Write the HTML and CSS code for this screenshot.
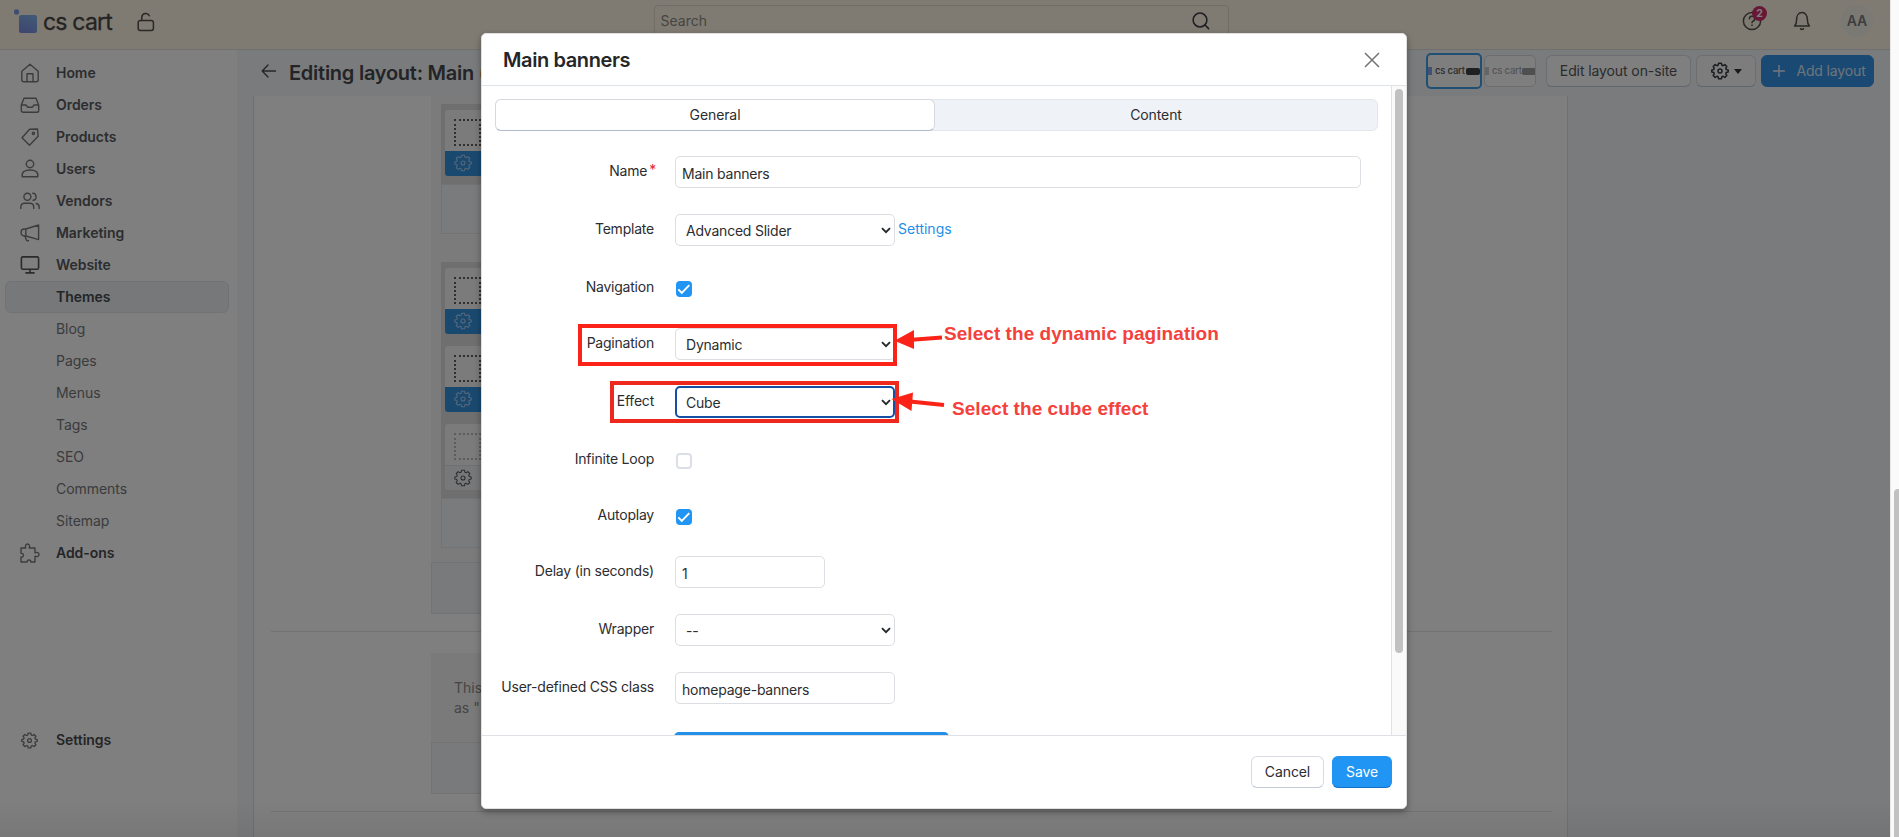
FILE: index.html
```html
<!DOCTYPE html>
<html lang="en">
<head>
<meta charset="utf-8">
<title>Editing layout: Main</title>
<link rel="stylesheet" href="styles.css">
</head>
<body>
<svg class="defs" width="0" height="0" aria-hidden="true">
  <symbol id="gear" viewBox="0 0 18 18"><path d="M7.6 1.2h2.8l.5 2 1.2.5 1.8-1.1 1.9 1.9-1.1 1.8.5 1.2 2 .5v2l-2 .5-.5 1.2 1.1 1.8-1.9 1.9-1.8-1.1-1.2.5-.5 2H7.6l-.5-2-1.2-.5-1.8 1.1-1.9-1.9 1.1-1.8-.5-1.2-2-.5V8l2-.5.5-1.2-1.1-1.8 1.900-1.900 1.800 1.100 1.200-.5z"/><circle cx="9" cy="9" r="2"/></symbol>
  <symbol id="chev" viewBox="0 0 10 7"><path d="M1 1.2l4 4 4-4"/></symbol>
</svg>
<div class="app">
  <header class="top">
    <div class="brand">
      <svg class="logo" width="24" height="25" viewBox="0 0 24 25"><defs><linearGradient id="lg" x1="0" y1="1" x2=".4" y2="0"><stop offset="0" stop-color="#7d88e0"/><stop offset="1" stop-color="#7fb0ea"/></linearGradient></defs><circle cx="2.5" cy="3" r="2.7" fill="#7c9be4"/><rect x="5" y="6" width="18" height="18" rx="2" fill="url(#lg)"/></svg>
      <span class="brand-name">cs cart</span>
      <svg class="ico dark" width="18" height="20" viewBox="0 0 18 20"><rect x="1.2" y="8.6" width="15.2" height="9.8" rx="2.2"/><path d="M4.8 8.5V5.2a4 4 0 0 1 7.6-1.5"/></svg>
    </div>
    <div class="search"><span>Search</span><svg class="ico black" width="18" height="18" viewBox="0 0 18 18"><circle cx="8" cy="8" r="6.9"/><path d="M13 13l3.6 3.6"/></svg></div>
    <div class="user">
      <span class="help"><svg class="ico dark" width="20" height="20" viewBox="0 0 20 20"><circle cx="10" cy="10" r="8.6"/><path d="M7.4 7.8a2.6 2.6 0 1 1 3.6 2.4c-.8.4-1 .8-1 1.5M10 14v.6"/></svg><b class="count">2</b></span>
      <svg class="ico dark" width="18" height="20" viewBox="0 0 18 20"><path d="M1.6 15h14.8c-1.6-1.7-2-3.2-2-6.3C14.400 4.500 12.500 1.600 9 1.600S3.600 4.500 3.600 8.700c0 3.100-.4 4.600-2 6.300zM7.600 17.700c.7.9 2.100.9 2.800 0"/></svg>
      <span class="avatar">AA</span>
    </div>
  </header>
  <div class="main">
    <nav class="side">
      <a class="item"><svg class="ico" viewBox="0 0 20 20"><path d="M1.800 8.200L10 1.300l8.200 6.900v8.600a2 2 0 0 1-2 2H3.800a2 2 0 0 1-2-2zM7 18.500v-7.700h6v7.700"/></svg>Home</a>
      <a class="item"><svg class="ico" viewBox="0 0 20 20"><path d="M1.300 10L4 3.300h12l2.700 6.700v5.500a1.800 1.800 0 0 1-1.800 1.800H3.100a1.800 1.800 0 0 1-1.800-1.800zM1.300 10H6l1.600 2.200h4.800L14 10h4.700"/></svg>Orders</a>
      <a class="item"><svg class="ico" viewBox="0 0 20 20"><path d="M9.600 2.300L17.500 2l.6 7.200-8.600 9L2 10.700z"/><circle cx="13.400" cy="6.400" r="1.100"/></svg>Products</a>
      <a class="item"><svg class="ico" viewBox="0 0 20 20"><circle cx="10" cy="5" r="3.700"/><path d="M2.300 17.800c-1-5 2.600-6.800 7.700-6.800s8.700 1.800 7.700 6.800z"/></svg>Users</a>
      <a class="item"><svg class="ico" viewBox="0 0 20 20"><circle cx="7.400" cy="5.800" r="3.500"/><path d="M.8 17.600v-1.500c0-2.500 1.600-3.900 3.900-3.900h5.100c2.300 0 3.900 1.400 3.900 3.900v1.500M12.800 2.300c4.300.2 4.300 6.800.2 7M16.200 12.500c2 .5 3 1.700 3 3.600v1.500"/></svg>Vendors</a>
      <a class="item"><svg class="ico" viewBox="0 0 20 20"><path d="M5.800 6L18.600 2v14.600L5.800 13H4.300C0 13 0 6 4.300 6zM5.800 6v7M5 13.200l1.300 3.500c.4 1.400 2 1.300 2.200.9"/></svg>Marketing</a>
      <a class="item"><svg class="ico bold" viewBox="0 0 20 20"><rect x="1.400" y="1.900" width="17.200" height="12.300" rx="1.500"/><path d="M10 14.500v3M6 17.900h8"/></svg>Website</a>
      <a class="item sub active">Themes</a>
      <a class="item sub">Blog</a>
      <a class="item sub">Pages</a>
      <a class="item sub">Menus</a>
      <a class="item sub">Tags</a>
      <a class="item sub">SEO</a>
      <a class="item sub">Comments</a>
      <a class="item sub">Sitemap</a>
      <a class="item strong"><svg class="ico" viewBox="0 0 20 20"><path d="M1 5h4.800c-1-2.200 0-4 1.700-4s2.700 1.800 1.700 4H15v4.800c2.200-1 4 0 4 1.700s-1.800 2.700-4 1.700V19h-4.200c.7-2.700-4.300-2.700-3.600 0H1v-5c3.300.8 3.300-4.300 0-3.600z"/></svg>Add-ons</a>
      <a class="item strong last"><svg class="ico small"><use href="#gear"/></svg>Settings</a>
    </nav>
    <section class="content">
      <div class="titlebar">
        <svg class="ico back" width="16" height="14" viewBox="0 0 16 14"><path d="M14.500 7H1.500M7 1L1.200 7 7 13"/></svg>
        <h1>Editing layout: Main (</h1>
        <div class="actions">
          <span class="thumb on"><i class="edge"></i><em>cs cart</em><i class="tag"></i></span>
          <span class="thumb off"><i class="edge"></i><em>cs cart</em><i class="tag"></i></span>
          <span class="btn edit">Edit layout on-site</span>
          <span class="btn tools"><svg class="ico black" width="18" height="18"><use href="#gear"/></svg><i class="caret"></i></span>
          <span class="btn add"><svg class="ico" width="12" height="12" viewBox="0 0 12 12"><path d="M6 .5v11M.5 6h11"/></svg>Add layout</span>
        </div>
      </div>
      <div class="card">
        <div class="container first">
          <div class="grid">
            <div class="blocks">
              <div class="block"><div class="pic"><i></i></div><div class="bar"><svg class="ico" width="18" height="18"><use href="#gear"/></svg></div></div>
            </div>
            <div class="foot"></div>
          </div>
          <div class="grid">
            <div class="blocks">
              <div class="block"><div class="pic"><i></i></div><div class="bar"><svg class="ico" width="18" height="18"><use href="#gear"/></svg></div></div>
              <div class="block"><div class="pic"><i></i></div><div class="bar"><svg class="ico" width="18" height="18"><use href="#gear"/></svg></div></div>
              <div class="block disabled"><div class="pic"><i></i></div><div class="bar"><svg class="ico" width="18" height="18"><use href="#gear"/></svg></div></div>
            </div>
            <div class="foot"></div>
          </div>
        </div>
        <div class="cfoot"></div>
        <hr>
        <div class="container note"><p>This<br>as "</p></div>
        <div class="cfoot"></div>
        <hr class="second">
      </div>
    </section>
  </div>
  <div class="overlay"></div>
  <div class="modal">
    <div class="mhead"><h2>Main banners</h2><svg class="ico close" width="16" height="16" viewBox="0 0 16 16"><path d="M1 1l14 14M15 1L1 15"/></svg></div>
    <div class="mbody">
      <div class="form">
        <div class="tabs"><span class="tab on">General</span><span class="tab">Content</span></div>
        <div class="row"><label>Name<sup>*</sup></label><span class="field wide">Main banners</span></div>
        <div class="row"><label>Template</label><span class="field sel">Advanced Slider<svg><use href="#chev"/></svg></span><a class="link">Settings</a></div>
        <div class="row chk"><label>Navigation</label><span class="box on"><svg viewBox="0 0 16 16"><path d="M2.300 8.300l3.500 3.600 7.500-7.700"/></svg></span></div>
        <div class="row"><label>Pagination</label><span class="field sel">Dynamic<svg><use href="#chev"/></svg></span></div>
        <div class="row"><label>Effect</label><span class="field sel focus">Cube<svg><use href="#chev"/></svg></span></div>
        <div class="row chk"><label>Infinite Loop</label><span class="box"></span></div>
        <div class="row chk"><label>Autoplay</label><span class="box on"><svg viewBox="0 0 16 16"><path d="M2.300 8.300l3.500 3.600 7.500-7.700"/></svg></span></div>
        <div class="row"><label>Delay (in seconds)</label><span class="field short">1</span></div>
        <div class="row"><label>Wrapper</label><span class="field sel">--<svg><use href="#chev"/></svg></span></div>
        <div class="row"><label>User-defined CSS class</label><span class="field mid">homepage-banners</span></div>
        <div class="more"></div>
      </div>
      <div class="mtrack"><div class="mthumb"></div></div>
    </div>
    <div class="mfoot"><span class="btn cancel">Cancel</span><span class="btn save">Save</span></div>
  </div>
  <div class="mark mark-a"></div>
  <div class="mark mark-b"></div>
  <svg class="arrows" width="60" height="100" viewBox="0 0 60 100"><path d="M4.500 20.700L24 10v19z"/><path d="M22 19.700L52 17.600" /><path d="M1.500 79L23 72.500l-1.500 18.500z"/><path d="M20 81.500L54 85"/></svg>
  <div class="callout callout-a">Select the dynamic pagination</div>
  <div class="callout callout-b">Select the cube effect</div>
</div>
<div class="pagebar"><div class="pagethumb"></div></div>
</body>
</html>
```
FILE: styles.css
```css
* { box-sizing: border-box; }
body { margin: 0; width: 1899px; height: 837px; overflow: hidden; display: flex; font: 14px/20px Inter, sans-serif; color: #2c2d30; background: #fff; }
h1, h2, p { margin: 0; }
.defs { position: absolute; }
.app { position: relative; width: 1890px; height: 837px; overflow: hidden; display: flex; flex-direction: column; }
.ico { fill: none; stroke: #76797d; stroke-width: 1.4; stroke-linecap: round; stroke-linejoin: round; flex: none; }
.ico.dark { stroke: #56524b; stroke-width: 1.5; }
.ico.black { stroke: #3a3b3e; stroke-width: 1.5; }

/* top bar */
.top { height: 50px; flex: none; display: flex; justify-content: space-between; background: #fef6e6; border-bottom: 1px solid #dedfe0; padding: 0 17px 0 14px; }
.brand { display: flex; align-items: flex-start; width: 640px; padding-top: 9px; }
.brand-name { font-size: 23px; letter-spacing: -.8px; line-height: 26px; margin-left: 5px; width: 94px; color: #4a4946; -webkit-text-stroke: .3px #4a4946; }
.brand .dark { margin-top: 3px; }
.search { width: 575px; height: 34px; margin: 5px 1px 0 -1px; border: 1px solid #e2dccf; border-radius: 4px; display: flex; justify-content: space-between; align-items: center; padding: 0 18px 2px 6px; color: #8e8a83; }
.user { width: 643px; display: flex; justify-content: flex-end; align-items: center; padding-bottom: 7px; }
.help { position: relative; height: 20px; margin-right: 31px; }
.count { position: absolute; left: 10px; top: -5px; width: 15px; height: 15px; border-radius: 8px; background: #d02f69; color: #fff; font-size: 10.500px; line-height: 15px; text-align: center; }
.avatar { width: 32px; height: 32px; margin-left: 30px; border-radius: 50%; background: #f6f2e8; color: #7b7c7e; font-weight: 600; line-height: 32px; text-align: center; }

/* sidebar */
.main { flex: 1; display: flex; min-height: 0; }
.side { width: 237px; background: #fff; padding: 7px 8px 0 5px; display: flex; flex-direction: column; }
.item { height: 32px; flex: none; display: flex; align-items: center; padding-left: 15px; font-weight: 600; color: #595b5e; border: 1px solid transparent; letter-spacing: -.05px; }
.item .ico { width: 20px; height: 20px; margin-right: 16px; margin-left: -1px; }
.item .ico.small { width: 17px; height: 17px; margin: 0 18px 0 0; }
.item .ico.bold { stroke: #55575a; stroke-width: 1.600; }
.item.sub { padding-left: 50px; font-weight: 400; color: #75777a; }
.item.sub.active { background: #edf1f5; border-color: #e1e5ea; border-radius: 6px; font-weight: 600; color: #47494d; }
.item.strong { color: #4a4c4f; }
.item.last { margin-top: 155px; }

/* page */
.content { flex: 1; background: #f4f6fa; padding-left: 16px; }
.titlebar { height: 46px; display: flex; align-items: flex-start; padding: 0 16px 0 8px; }
.back { stroke: #4b4d50; margin-top: 14px; }
h1 { font-size: 20px; line-height: 26px; font-weight: 600; margin: 10px 0 0 12px; color: #47494c; letter-spacing: -.25px; }
.actions { margin-left: auto; display: flex; align-items: center; padding-top: 3px; }
.thumb { width: 52px; height: 32px; border: 1px solid #d5d8db; border-radius: 5px; display: flex; align-items: center; overflow: hidden; margin-right: 10px; background: #fdfdfd; }
.thumb em { font: 500 9.500px/12px Inter, sans-serif; width: 33px; margin-left: 3px; color: #55565a; letter-spacing: -.2px; white-space: nowrap; }
.edge { width: 4px; height: 8px; background: #81a3e6; flex: none; }
.tag { width: 14px; height: 7px; background: #3f4042; border-radius: 2px; flex: none; }
.thumb.on { width: 56px; height: 36px; border: 2px solid #409fe9; margin-right: 2px; }
.thumb.off > * { opacity: .5; }
.thumb.off .edge { background: #999; }
.btn { height: 32px; border: 1px solid #d8dce2; border-bottom-color: #c3cad8; border-radius: 6px; display: flex; align-items: center; justify-content: center; background: #fff; }
.edit { width: 145px; margin-right: 5px; color: #55575a; letter-spacing: -.1px; }
.tools { width: 60px; margin-right: 5px; gap: 5px; background: #fafbfd; }
.caret { border: 4px solid transparent; border-top: 5px solid #333; border-bottom: 0; }
.add { width: 113px; gap: 11px; padding-left: 4px; letter-spacing: -.15px; background: #3594e6; border-color: #3594e6; color: #d9e8f6; }
.add .ico { stroke: #e5eff8; }

.card { width: 1315px; height: 745px; background: #fff; border: solid #dce1e7; border-width: 0 1px; padding-left: 17px; overflow: hidden; }
.container { margin-left: 160px; width: 960px; background: #f7f7f7; padding: 8px 10px 0; }
.container.first { height: 466px; }
.grid { width: 460px; margin-bottom: 28px; }
.blocks { background: #dedede; padding: 6px 4px 8px; display: flex; flex-direction: column; gap: 12px; }
.foot, .cfoot { background: #f5f7f9; border: 1px solid #e3e6e9; height: 50px; }
.block { border-radius: 3px; overflow: hidden; height: 66px; }
.pic { height: 41px; background: #f7f7f7; padding: 9px; }
.pic i { display: block; width: 27px; height: 27px; border: 2px dotted #606163; }
.bar { height: 25px; background: #3592e0; padding: 3px 9px; }
.bar .ico { stroke: #a9cef0; stroke-width: 1.100; }
.disabled .pic i { opacity: .4; }
.disabled .bar { background: #eef0f3; border-top: 1px solid #dde0e3; }
.disabled .ico { stroke: #5c5e61; }
.cfoot { margin-left: 160px; width: 960px; height: 52px; background: #f3f5f8; }
hr { border: 0; border-top: 1px solid #e4e4e4; margin: 17px 0 21px; width: 1281px; }
.note { height: 89px; background: #f4f4f4; padding: 25px 12px 0 23px; color: #8c8c8c; }
.overlay { position: absolute; inset: 0; background: linear-gradient(transparent 800px, rgba(0,0,0,.06)), rgba(0,0,0,.5); }

/* dialog */
.modal { position: absolute; left: 481px; top: 33px; width: 926px; height: 776px; background: #fff; border-radius: 5px; border: 1px solid #e0e0e0; display: flex; flex-direction: column; box-shadow: 0 3px 7px rgba(0,0,0,.35); }
.mhead { height: 52px; border-bottom: 1px solid #dde3e6; display: flex; justify-content: space-between; padding: 13px 26px 0 21px; }
h2 { font-size: 20px; line-height: 26px; font-weight: 600; color: #252628; letter-spacing: -.4px; }
.close { stroke: #737475; stroke-width: 1.500; margin-top: 5px; stroke-linecap: butt; }
.mbody { height: 650px; border-bottom: 1px solid #dde1e5; display: flex; overflow: hidden; }
.form { width: 909px; padding: 13px 13px 0; letter-spacing: -.22px; }
.tabs { height: 32px; display: flex; background: #eff3f8; border: 1px solid #e2e7ec; border-radius: 6px; margin-bottom: 25px; line-height: 30px; letter-spacing: -.1px; }
.tab { flex: 1; text-align: center; }
.tab.on { flex: 0 0 440px; background: #fff; border: 1px solid #d5d9dd; border-bottom-color: #aeb9cb; border-radius: 6px; margin: -1px 0 -1px -1px; }
.row { display: flex; height: 58px; align-items: flex-start; }
.row.chk { height: 56px; }
label { width: 159px; text-align: right; padding-top: 5px; margin-right: 21px; white-space: nowrap; }
sup { color: #e0263d; font-size: 14px; line-height: 0; vertical-align: 1px; margin: 0 -2px 0 2px; }
.field { position: relative; height: 32px; border: 1px solid #dbdee2; border-radius: 5px; padding: 1px 6px 0; line-height: 31px; }
.wide { width: 686px; }
.short { width: 150px; }
.mid { width: 220px; }
.sel { width: 220px; padding-left: 10px; display: flex; justify-content: space-between; align-items: center; padding-right: 3px; }
.sel svg { width: 10px; height: 7px; fill: none; stroke: #27282a; stroke-width: 1.900; margin-bottom: 1px; }
.focus { border: 2px solid #1550a5; padding-left: 9px; padding-right: 2px; }
.link { color: #238fe6; margin: 5px 0 0 3px; letter-spacing: 0; }
.box { width: 16px; height: 16px; margin: 9px 0 0 1px; border: 2px solid #dddfe8; border-radius: 4px; }
.box.on { background: #2095f3; border: 0; }
.box svg { display: block; fill: none; stroke: #fff; stroke-width: 1.900; }
.more { width: 275px; height: 32px; margin: 2px 0 0 179px; background: #2590e8; border-radius: 5px; }
.mtrack { width: 15px; background: #fafafa; border-left: 1px solid #dfe1e2; padding: 3px 3px; }
.mthumb { width: 8px; height: 564px; background: #c1c1c1; border-radius: 4px; }
.mfoot { display: flex; justify-content: flex-end; padding: 20px 14px 0; gap: 8px; letter-spacing: -.1px; }
.cancel { width: 73px; }
.save { width: 60px; background: #2095f3; border-color: #2095f3; border-bottom-color: #176fc6; color: #fff; }

/* callouts drawn over the dialog */
.mark { position: absolute; border: 4px solid #fb2318; }
.mark-a { left: 578px; top: 324px; width: 319px; height: 42px; }
.mark-b { left: 610px; top: 381px; width: 289px; height: 42px; border-color: #ee281d; }
.arrows { position: absolute; left: 890px; top: 320px; fill: #fb2318; }
.arrows path:nth-child(even) { stroke: #fb2318; stroke-width: 4; }
.callout { position: absolute; font: bold 19px/24px "Liberation Sans", sans-serif; color: #f4413c; white-space: nowrap; letter-spacing: .05px; }
.callout-a { left: 944px; top: 322px; }
.callout-b { left: 952px; top: 397px; }

.pagebar { width: 9px; background: #fafafa; border-left: 1px solid #e8e8e8; padding: 489px 0 0 3px; }
.pagethumb { height: 348px; background: #c1c1c1; border-radius: 4px 0 0 0; }
```
